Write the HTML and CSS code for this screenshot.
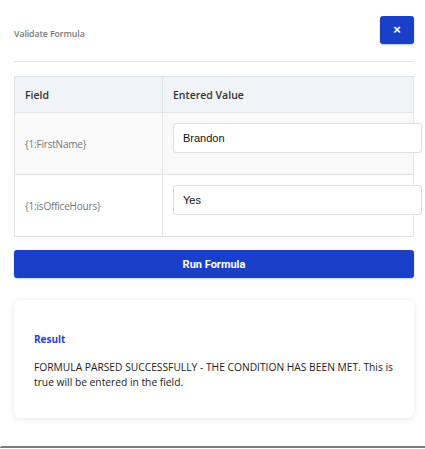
FILE: index.html
```html
<!DOCTYPE html>
<html>
<head>
<meta charset="utf-8">
<link rel="stylesheet" href="styles.css">
</head>
<body>
<div class="modal">
  <div class="modal-head">
    <div class="title">Validate Formula</div>
    <button class="close" type="button">×</button>
  </div>
  <div class="divider"></div>
  <table class="grid">
    <thead>
      <tr><th class="c1">Field</th><th class="c2">Entered Value</th></tr>
    </thead>
    <tbody>
      <tr class="odd">
        <td class="c1 fname">{1:FirstName}</td>
        <td class="c2"><div class="input">Brandon</div></td>
      </tr>
      <tr>
        <td class="c1 fname">{1:isOfficeHours}</td>
        <td class="c2"><div class="input">Yes</div></td>
      </tr>
    </tbody>
  </table>
  <button class="run" type="button">Run Formula</button>
  <div class="card">
    <div class="card-title">Result</div>
    <p class="card-text">FORMULA PARSED SUCCESSFULLY - THE CONDITION HAS BEEN MET. This is true will be entered in the field.</p>
  </div>
</div>
<div class="edge"></div>
</body>
</html>
```
FILE: styles.css
```css
html, body {
  margin: 0;
  padding: 0;
  background: #ffffff;
  width: 425px;
}
body {
  font-family: "Open Sans", "Noto Sans", sans-serif;
  color: #333;
  overflow: hidden;
  display: flex;
  flex-direction: column;
  height: 449px;
}
.modal {
  box-sizing: border-box;
  width: 425px;
  height: 446px;
  flex: none;
  padding: 16px 11px 0 14px;
}
.edge {
  flex: none;
  width: 425px;
  height: 2px;
  background: #7a7a7a;
  border-top-left-radius: 2px;
}
.modal-head {
  display: flex;
  justify-content: space-between;
  align-items: flex-start;
  height: 28px;
}
.title {
  font-size: 8.8px;
  font-weight: 600;
  color: #7a7a7a;
  padding-top: 12px;
  letter-spacing: -0.1px;
}
.close {
  width: 34px;
  height: 28px;
  border: none;
  border-radius: 3px;
  background: #1a3fc9;
  color: #fff;
  font-family: "Liberation Sans", sans-serif;
  font-size: 13px;
  font-weight: 700;
  line-height: 26px;
  padding: 0;
  box-shadow: 0 1px 2px rgba(0,0,0,0.25);
}
.divider {
  margin-top: 17px;
  width: 400px;
  height: 0;
  border-top: 1px solid #e6e6e6;
}
.grid {
  margin-top: 14px;
  width: 400px;
  border-collapse: collapse;
  table-layout: fixed;
}
.grid th, .grid td {
  border: 1px solid #e3e3e3;
  text-align: left;
}
.grid th {
  background: #f1f4f7;
  height: 35px;
  padding: 0 0 0 10px;
  font-size: 10.5px;
  font-weight: 600;
  color: #333;
}
.grid .c1 { width: 137px; }
.grid td {
  height: 62px;
  box-sizing: border-box;
  vertical-align: middle;
}
.grid td.c2 {
  padding: 10px 0 20px 10px;
  vertical-align: top;
  overflow: visible;
}
.grid tr.odd td { background: #f9f9f9; }
.fname {
  padding-left: 10px;
  font-size: 10px;
  color: #777;
  letter-spacing: -0.2px;
}
.input {
  box-sizing: border-box;
  width: 249px;
  height: 30px;
  border: 1px solid #dedede;
  border-radius: 3px;
  background: #fff;
  padding: 0 0 0 9px;
  font-family: "Liberation Sans", sans-serif;
  font-size: 11px;
  font-weight: 500;
  color: #111;
  line-height: 28px;
  position: relative;
  z-index: 1;
}
.run {
  display: block;
  margin-top: 13px;
  width: 400px;
  height: 28px;
  border: none;
  border-radius: 3px;
  background: #1a3fc9;
  color: #fff;
  font-family: Roboto, sans-serif;
  font-size: 11px;
  font-weight: 700;
  box-shadow: 0 1px 2px rgba(0,0,0,0.2);
}
.card {
  box-sizing: border-box;
  margin-top: 22px;
  width: 400px;
  height: 118px;
  border-radius: 6px;
  background: #fff;
  box-shadow: 0 1px 6px rgba(0,0,0,0.10);
  padding: 32px 20px 0 20px;
}
.card-title {
  font-size: 10px;
  font-weight: 700;
  color: #2448cf;
  line-height: 14px;
}
.card-text {
  margin: 14px 0 0 0;
  font-size: 10.25px;
  line-height: 15px;
  color: #222;
}
```
